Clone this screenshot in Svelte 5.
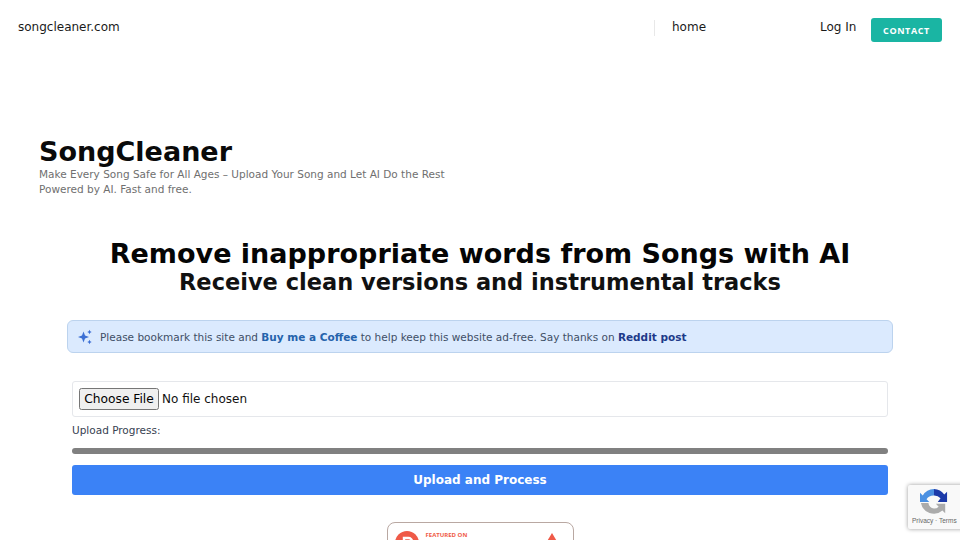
<script>
  const title = 'SongCleaner';
</script>

<div class="page">
  <header class="nav">
    <a class="brand" href="#top">songcleaner.com</a>
    <nav class="links">
      <span class="sep"></span>
      <a class="home" href="#home">home</a>
      <a class="login" href="#login">Log In</a>
      <button class="contact">CONTACT</button>
    </nav>
  </header>

  <section class="hero">
    <h1>{title}</h1>
    <p>Make Every Song Safe for All Ages – Upload Your Song and Let AI Do the Rest<br />Powered by AI. Fast and free.</p>
  </section>

  <section class="headline">
    <h2>Remove inappropriate words from Songs with AI</h2>
    <h3>Receive clean versions and instrumental tracks</h3>
  </section>

  <div class="alert">
    <svg width="16" height="16" viewBox="0 0 16 16" aria-hidden="true">
      <path d="M6.5 2.5 L8 6.5 L12 8 L8 9.5 L6.5 13.5 L5 9.5 L1 8 L5 6.5 Z" fill="#3b6fd4" />
      <path d="M12.5 0.8 L13.2 2.3 L14.7 3 L13.2 3.7 L12.5 5.2 L11.8 3.7 L10.3 3 L11.8 2.3 Z" fill="#3b6fd4" />
      <path d="M12.5 10.8 L13.2 12.3 L14.7 13 L13.2 13.7 L12.5 15.2 L11.8 13.7 L10.3 13 L11.8 12.3 Z" fill="#3b6fd4" />
    </svg>
    <span>Please bookmark this site and <a class="coffee" href="#coffee">Buy me a Coffee</a> to help keep this website ad-free. Say thanks on <a class="reddit" href="#reddit">Reddit post</a></span>
  </div>

  <form class="upload">
    <div class="filebox"><input type="file" /></div>
    <label for="progress">Upload Progress:</label>
    <div class="bar" id="progress"></div>
    <button type="button" class="submit">Upload and Process</button>
  </form>

  <div class="badge">
    <svg class="ph" width="24" height="24" viewBox="0 0 24 24" aria-hidden="true">
      <circle cx="12" cy="12" r="12" fill="#ef5a48" />
      <path d="M9 18V7h4.5a3.4 3.4 0 0 1 0 7H9" fill="none" stroke="#fff" stroke-width="2.4" />
    </svg>
    <span class="feat">FEATURED ON</span>
    <svg class="tri" width="12" height="10" viewBox="0 0 12 10" aria-hidden="true"><path d="M6 0 L12 10 H0 Z" fill="#ef5a48" /></svg>
  </div>

  <aside class="recaptcha">
    <svg viewBox="0 0 30 30" aria-hidden="true">
      <path d="M15 1 A14 14 0 0 1 26 7 L29 4 V15 H19 L22 11 A9 9 0 0 0 15 8 Z" fill="#1c3aa9" />
      <path d="M15 1 A14 14 0 0 0 3 8 L0 5 V15 H10 L7 12 A9 9 0 0 1 15 8 Z" fill="#4a90e2" />
      <path d="M1 16 H9 A7 7 0 0 0 15 22 A7 7 0 0 0 20 20 L17 17 H27 V27 L24 24 A14 14 0 0 1 1 16 Z" fill="#ababab" />
    </svg>
    <span>Privacy · Terms</span>
  </aside>
</div>

<style>
  :global(body) {
    margin: 0;
    background: #fff;
    overflow: hidden;
  }
  .page {
    position: relative;
    height: 540px;
    overflow: hidden;
    font-family: "DejaVu Sans", sans-serif;
    color: #111;
  }
  a { text-decoration: none; color: inherit; }
  .nav {
    display: flex;
    justify-content: space-between;
    align-items: flex-start;
    height: 60px;
    padding: 18px 18px 0;
    box-sizing: border-box;
  }
  .brand { font-size: 12px; line-height: 18px; color: #1a1a1a; }
  .links { display: flex; align-items: flex-start; }
  .sep { width: 1px; height: 16px; margin-top: 2px; background: #e8e8e8; }
  .home { margin-left: 17px; width: 148px; font-size: 12px; line-height: 18px; color: #1a1a1a; }
  .login { width: 51px; font-size: 12px; line-height: 18px; color: #1a1a1a; }
  .contact {
    width: 71px;
    height: 24px;
    padding: 0;
    border: 0;
    border-radius: 3px;
    background: #1ab5a3;
    color: #fff;
    font: bold 9px "Open Sans", "DejaVu Sans", sans-serif;
    letter-spacing: 0.6px;
  }
  .hero { margin: 76px 0 0 39px; }
  h1 { margin: 0; font-size: 27px; line-height: 31px; font-weight: 700; color: #0a0a0a; }
  .hero p { margin: 0; font-size: 10.5px; line-height: 15px; color: #6f6f6f; }
  .headline { margin-top: 40px; text-align: center; }
  h2 { margin: 0; font-size: 27px; line-height: 34px; font-weight: 700; color: #050505; }
  h3 { margin: 0; font-size: 22.5px; line-height: 22px; font-weight: 700; color: #111; }
  .alert {
    display: flex;
    align-items: center;
    gap: 7px;
    margin: 27px 67px 28px;
    height: 33px;
    padding: 0 9px;
    box-sizing: border-box;
    background: #dbeafe;
    border: 1px solid #bcd3ee;
    border-radius: 6px;
    font-size: 10.5px;
    color: #3f4f66;
  }
  .alert svg { flex: none; }
  .coffee { font-weight: 700; color: #2563ac; }
  .reddit { font-weight: 700; color: #1e3a8a; }
  .upload { margin: 0 72px; display: flex; flex-direction: column; }
  .filebox {
    height: 36px;
    box-sizing: border-box;
    display: flex;
    align-items: center;
    padding: 0 6px;
    border: 1px solid #e5e7eb;
    border-radius: 3px;
  }
  .filebox input { font: 12px "DejaVu Sans", sans-serif; color: #111; }
  .filebox input::file-selector-button {
    font: 12.25px "DejaVu Sans", sans-serif;
    width: 80px;
    height: 22px;
    padding: 0 0 1px;
    margin-right: 3px;
  }
  label { margin-top: 6px; font-size: 10.5px; line-height: 15px; color: #374151; }
  .bar { margin-top: 10px; height: 6px; border-radius: 3px; background: #808080; }
  .submit {
    margin-top: 11px;
    height: 30px;
    padding: 0;
    border: 0;
    border-radius: 3px;
    background: #3b82f6;
    color: #fff;
    font: 700 12px "DejaVu Sans", sans-serif;
  }
  .badge {
    position: relative;
    margin: 27px auto 0;
    width: 187px;
    height: 54px;
    box-sizing: border-box;
    border: 1px solid #b9a8a2;
    border-radius: 8px;
  }
  .ph { position: absolute; left: 7px; top: 8px; }
  .feat { position: absolute; left: 38px; top: 8px; font: bold 6px "Open Sans", sans-serif; color: #ef5a48; }
  .tri { position: absolute; right: 15px; top: 10px; }
  .recaptcha {
    position: absolute;
    left: 908px;
    top: 485px;
    width: 60px;
    height: 44px;
    background: #f9f9f9;
    box-shadow: 0 0 4px #9a9a9a;
    border-radius: 2px 0 0 2px;
    display: flex;
    flex-direction: column;
    align-items: flex-start;
    padding-left: 4px;
    box-sizing: border-box;
  }
  .recaptcha svg { margin: 3px 0 0 8px; width: 28px; height: 28px; flex: none; }
  .recaptcha span { font: 6.5px "Liberation Sans", sans-serif; color: #666; white-space: nowrap; margin-top: 1px; }
</style>
